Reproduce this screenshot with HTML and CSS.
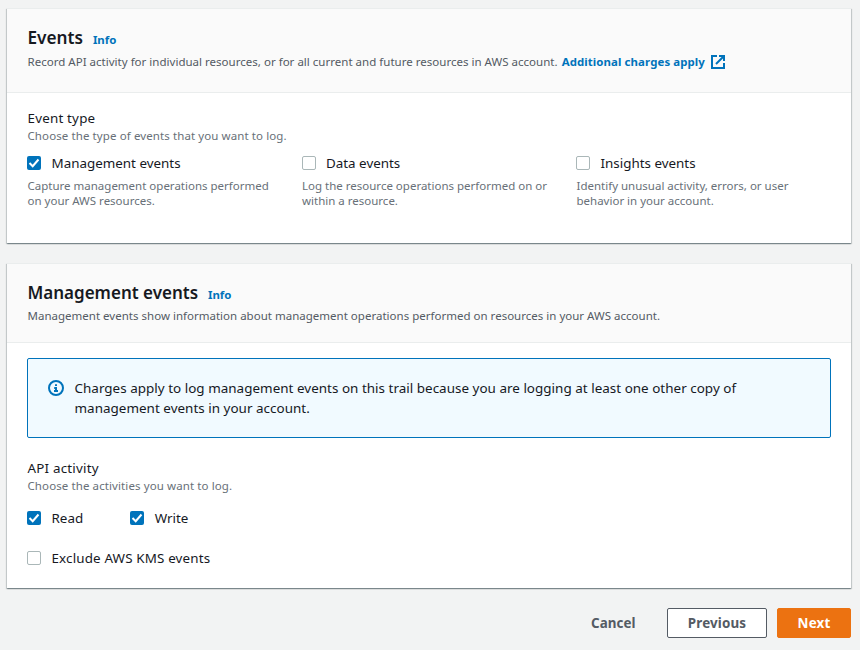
FILE: index.html
```html
<!DOCTYPE html>
<html lang="en">
<head>
<meta charset="utf-8">
<title>Choose log events</title>
<link rel="stylesheet" href="styles.css">
</head>
<body>
<main class="page">
  <section class="card events">
    <header class="card-head">
      <div class="title"><h2>Events</h2><a class="info">Info</a></div>
      <p class="sub"><span>Record API activity for individual resources, or for all current and future resources in AWS account.</span><a class="link">Additional charges apply</a><svg class="ext" viewBox="0 0 14 14"><path d="M6 1H1v12h12V8"/><path d="M12.500 1.500L5 9"/><path class="solid" d="M8 0h6v6h-2V2H8z"/></svg></p>
    </header>
    <div class="body">
      <div class="label">Event type</div>
      <div class="hint">Choose the type of events that you want to log.</div>
      <div class="types">
        <div><label class="check"><i class="box on"><svg viewBox="0 0 14 14"><path d="M2.500 7l3.200 3.200L11.500 3.500"/></svg></i><span>Management events</span></label><p>Capture management operations performed<br>on your AWS resources.</p></div>
        <div><label class="check"><i class="box"></i><span>Data events</span></label><p>Log the resource operations performed on or<br>within a resource.</p></div>
        <div><label class="check"><i class="box"></i><span>Insights events</span></label><p>Identify unusual activity, errors, or user<br>behavior in your account.</p></div>
      </div>
    </div>
  </section>
  <section class="card management">
    <header class="card-head">
      <div class="title"><h2>Management events</h2><a class="info">Info</a></div>
      <p class="sub"><span>Management events show information about management operations performed on resources in your AWS account.</span></p>
    </header>
    <div class="body">
      <div class="alert"><svg class="ic" viewBox="0 0 16 16"><circle cx="8" cy="8" r="7"/><path d="M8 11V8H6.200M6 11h4M8 4.200v1.800"/></svg><p>Charges apply to log management events on this trail because you are logging at least one other copy of<br>management events in your account.</p></div>
      <div class="label">API activity</div>
      <div class="hint">Choose the activities you want to log.</div>
      <div class="activity">
        <label class="check"><i class="box on"><svg viewBox="0 0 14 14"><path d="M2.500 7l3.200 3.200L11.500 3.500"/></svg></i><span>Read</span></label>
        <label class="check"><i class="box on"><svg viewBox="0 0 14 14"><path d="M2.500 7l3.200 3.200L11.500 3.500"/></svg></i><span>Write</span></label>
      </div>
      <label class="check exclude"><i class="box"></i><span>Exclude AWS KMS events</span></label>
    </div>
  </section>
  <footer class="actions"><a class="cancel">Cancel</a><button class="btn">Previous</button><button class="btn primary">Next</button></footer>
</main>
</body>
</html>
```
FILE: styles.css
```css
* { box-sizing: border-box; }
body { margin: 0; background: #f2f3f3; color: #16191f; font: 13.400px/20px "Noto Sans", sans-serif; white-space: nowrap; }
h2, p { margin: 0; }
.page { height: 650px; padding: 8px 9px 0 7px; overflow: hidden; }
.card { background: #fff; box-shadow: 0 1px 1px rgba(0,28,36,.3), 1px 1px 1px rgba(0,28,36,.15), -1px 1px 1px rgba(0,28,36,.15); border-top: 1px solid #eaeded; }
.events { height: 235px; margin-bottom: 20px; }
.management { height: 325px; }
.card-head { height: 84px; padding: 18px 20px 0 20.500px; background: #fafafa; border-bottom: 1px solid #eaeded; }
.management .card-head { height: 79px; }
.title { display: flex; align-items: baseline; gap: 10px; height: 22px; }
h2 { font-size: 17.200px; line-height: 22px; font-weight: 600; }
.management h2 { font-size: 17px; }
.info { color: #0073bb; font-size: 11.450px; line-height: 20px; font-weight: 700; letter-spacing: -.05px; }
.sub { display: flex; align-items: center; margin-top: 5px; font-size: 11.530px; line-height: 16px; color: #545b64; letter-spacing: .01px; }
.management .sub { margin-top: 4px; font-size: 11.510px; }
.link { margin-left: 4px; color: #0073bb; font-size: 11.450px; font-weight: 700; letter-spacing: .09px; }
.ext { width: 14px; height: 14px; margin-left: 6px; fill: none; stroke: #0073bb; stroke-width: 2; }
.ext .solid { fill: #0073bb; stroke: none; }
.body { padding: 15px 20px 0; }
.label { padding-left: .5px; line-height: 20px; letter-spacing: .2px; }
.hint { padding-left: .5px; font-size: 11.500px; line-height: 16px; color: #687078; letter-spacing: .1px; }
.types { display: grid; grid-template-columns: 274.500px 274.500px 1fr; margin-top: 9px; }
.types p { padding-left: .5px; margin-top: 5px; font-size: 11.500px; line-height: 15px; color: #687078; }
.check { display: flex; align-items: center; gap: 10.500px; line-height: 20px; }
.box { display: block; width: 14px; height: 14px; border: 1px solid #aab7b8; border-radius: 2px; background: #fff; }
.box.on { border: 0; background: #0073bb; }
.box svg { display: block; fill: none; stroke: #fff; stroke-width: 2; }
.alert { display: flex; height: 80px; margin-bottom: 20px; padding: 19px 20px; border: 1px solid #0073bb; border-radius: 2px; background: #f1faff; gap: 10.500px; font-size: 13.450px; letter-spacing: .02px; }
.ic { width: 16px; height: 16px; margin-top: 2px; fill: none; stroke: #0073bb; stroke-width: 2; }
.activity { display: flex; gap: 47px; margin: 14px 0 20px; }
.exclude { letter-spacing: .15px; }
.actions { display: flex; justify-content: flex-end; align-items: center; gap: 10px; margin-top: 20px; height: 30px; }
.cancel { margin-right: 21.500px; color: #545b64; font-weight: 700; letter-spacing: .05px; }
.btn { width: 100px; height: 30px; padding: 0; border: 1px solid #545b64; border-radius: 2px; background: #fff; color: #545b64; font: 700 13.400px/20px "Noto Sans", sans-serif; letter-spacing: .15px; }
.primary { width: 74px; border-color: #ec7211; background: #ec7211; color: #fff; }
```
